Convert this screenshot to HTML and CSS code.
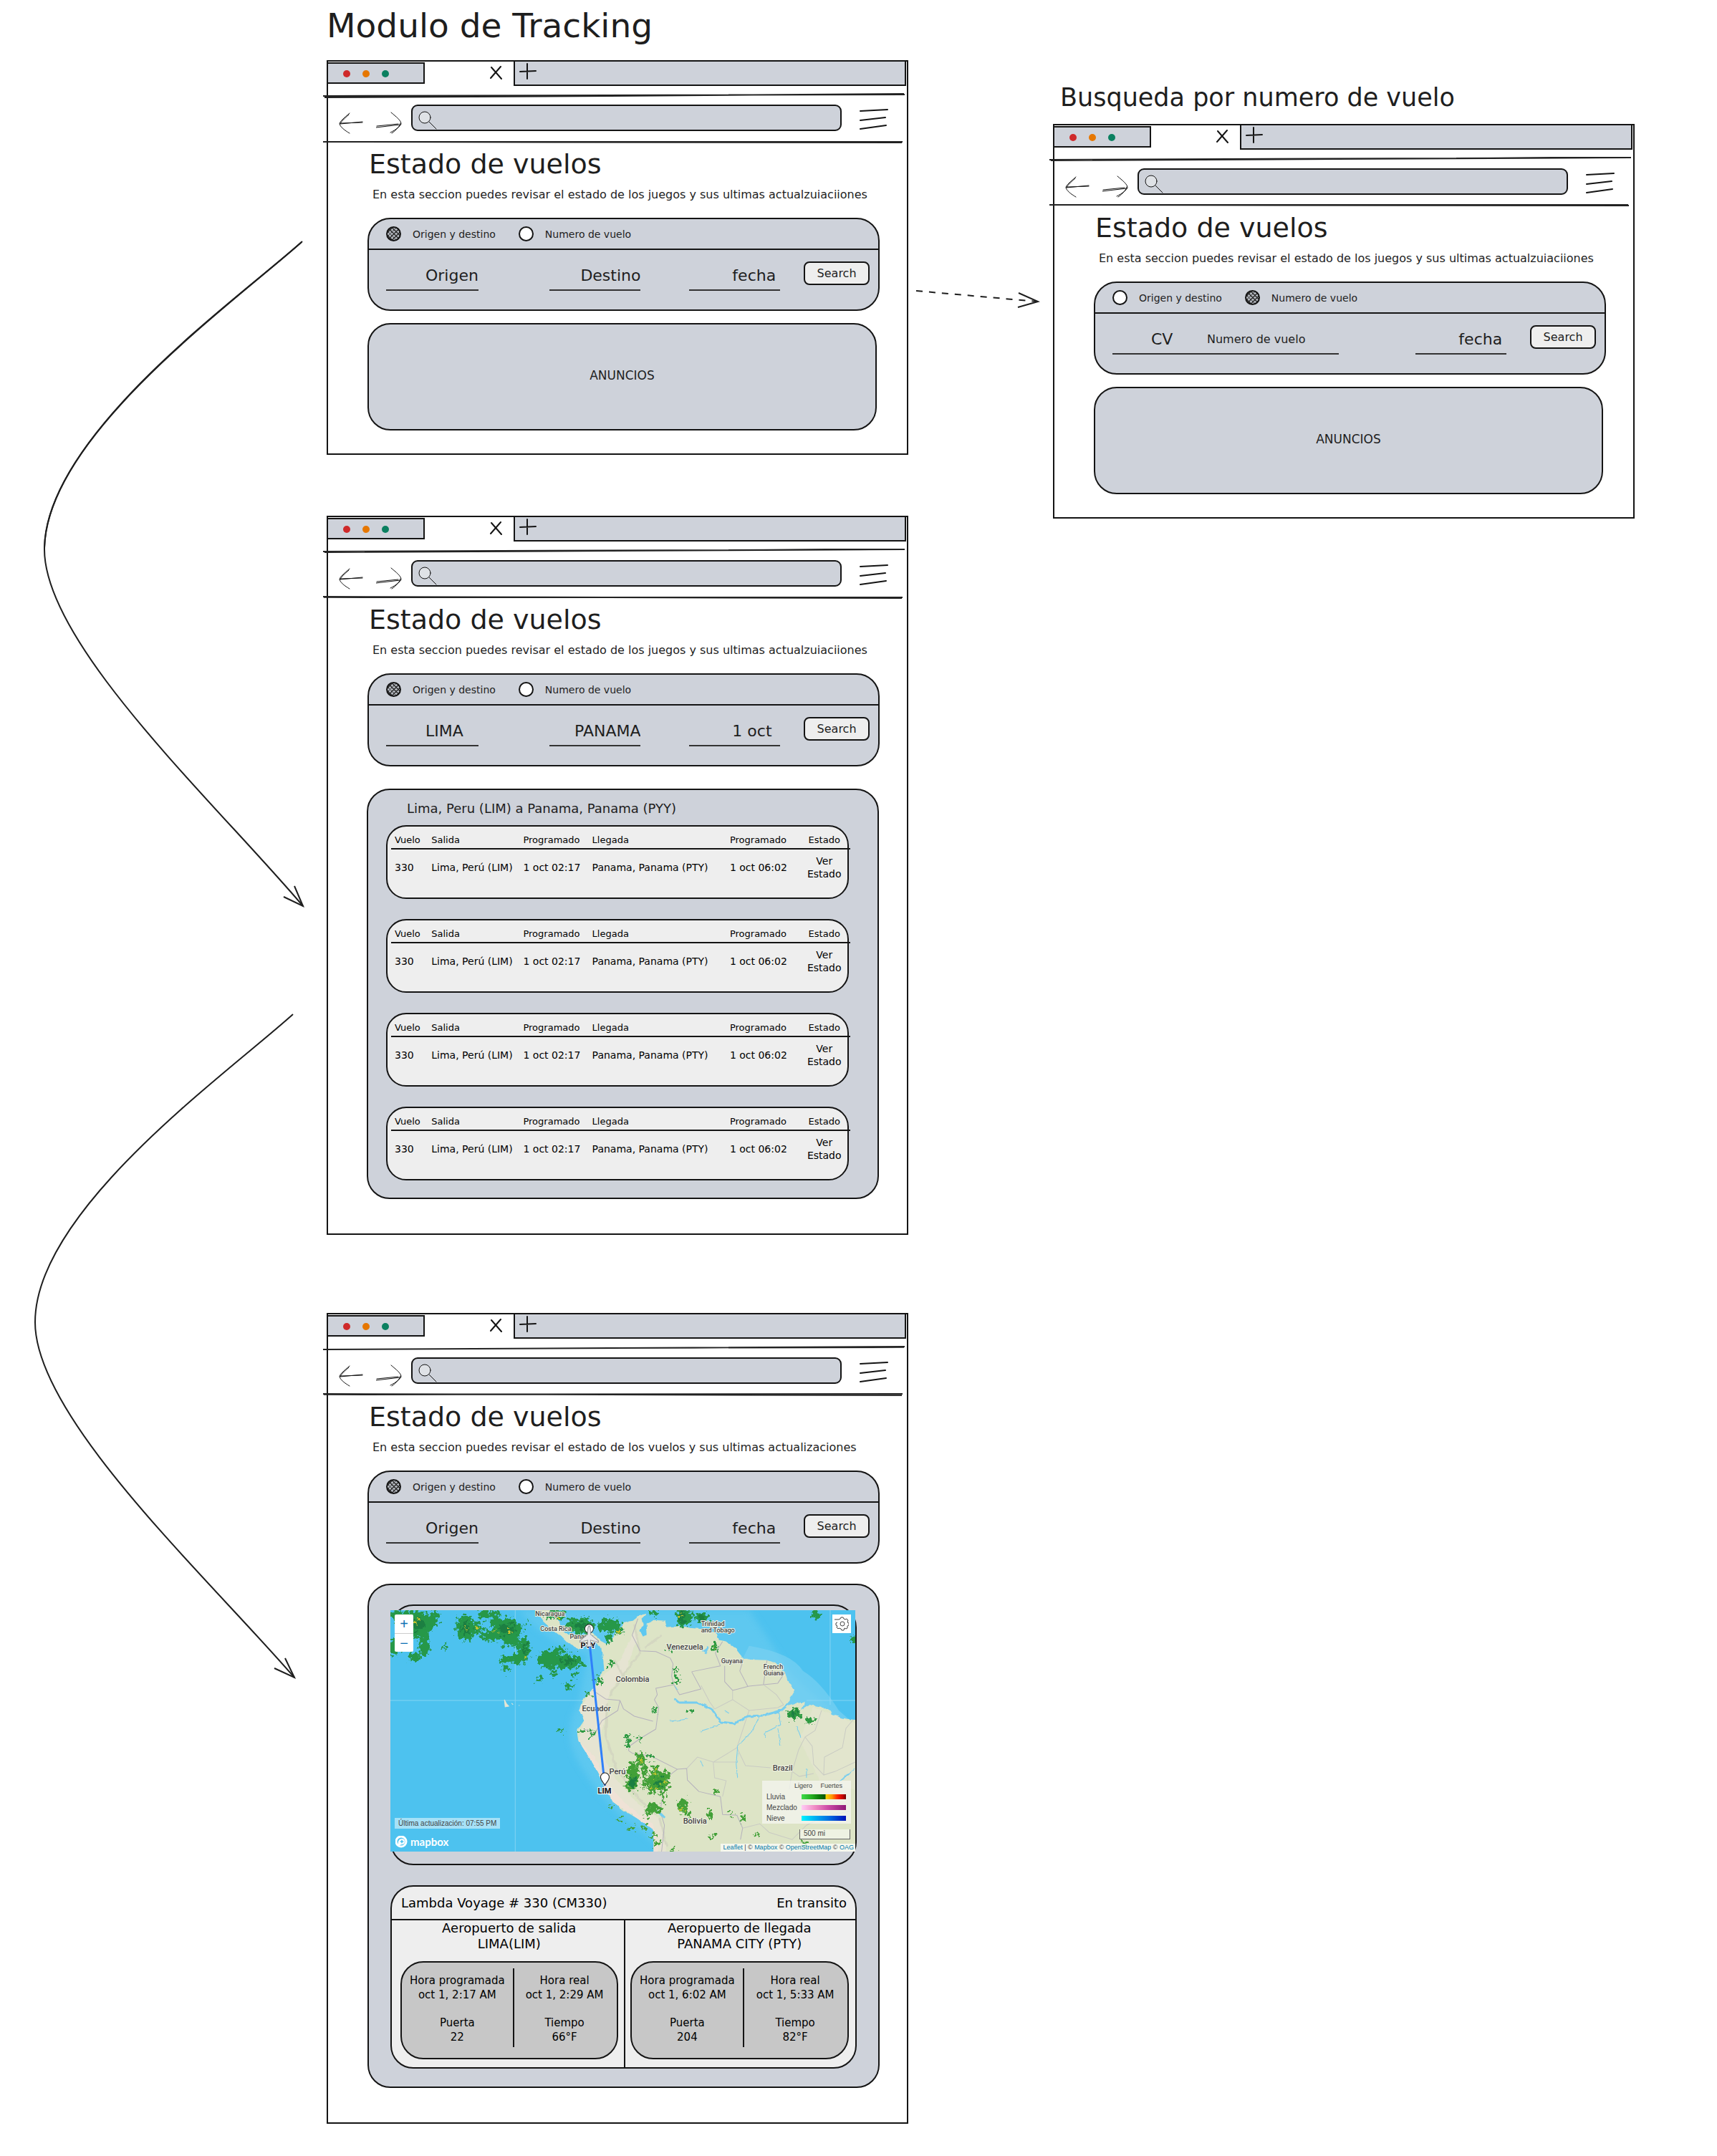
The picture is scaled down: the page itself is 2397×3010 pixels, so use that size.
FILE: index.html
```html
<!DOCTYPE html>
<html lang="es">
<head>
<meta charset="utf-8">
<meta name="viewport" content="width=device-width, initial-scale=1">
<title>Modulo de Tracking</title>
<link rel="stylesheet" href="styles.css">
</head>
<body>
<svg class="defs" width="0" height="0" aria-hidden="true">
  <symbol id="i-close" viewBox="0 0 18 20"><path d="M2 2 16 18M15 1 1 17"/></symbol>
  <symbol id="i-plus" viewBox="0 0 24 24"><path d="M1 12 23 11M11 1V22"/></symbol>
  <symbol id="i-back" viewBox="0 0 36 32"><path d="M15 2C7 9 1 14 1 17C2 21 8 26 15 30M14 4C7 10 3 14 2 17M2 17 33 14M2 16 33 15"/></symbol>
  <symbol id="i-forward" viewBox="0 0 36 32"><path d="M21 1C28 7 35 12 35 17C34 20 28 25 20 29M34 16C33 20 29 25 22 30M1 20 31 17M0 22 34 18"/></symbol>
  <symbol id="i-search" viewBox="0 0 26 28"><circle cx="9" cy="10" r="8" fill="#dfe2e6"/><path d="M15 16 25 26"/></symbol>
  <symbol id="i-menu" viewBox="0 0 40 30"><path d="M1 4 39 2M1 17 36 13M1 29 37 24"/></symbol>
</svg>

<main class="board">
  <svg class="flow flow-left" viewBox="0 0 456 2400" preserveAspectRatio="none" aria-hidden="true">
    <path d="M422 337C330 420 62 610 62 767C62 900 300 1120 423 1265"/>
    <path d="M421 338C331 418 64 607 62 767"/>
    <path d="M411 1237 423 1265 396 1252"/>
    <path d="M409 1416C317 1499 49 1689 49 1846C49 1979 287 2199 411 2342"/>
    <path d="M398 2315 411 2342 383 2329"/>
  </svg>

  <div class="column">
    <h1 class="board-title">Modulo de Tracking</h1>

    <section class="window">
      <div class="tabs">
        <div class="lights"><i class="red"></i><i class="orange"></i><i class="green"></i></div>
        <button class="icon close" type="button" aria-label="Cerrar"><svg width="18" height="20"><use href="#i-close"/></svg></button>
        <div class="tabbar"><button class="icon" type="button" aria-label="Nueva pestaña"><svg width="24" height="24"><use href="#i-plus"/></svg></button></div>
      </div>
      <svg class="rule" viewBox="0 0 812 10" preserveAspectRatio="none"><path d="M0 6 812 4M2 8 400 6 811 3"/></svg>
      <nav class="nav">
        <button class="icon" type="button" aria-label="Atras"><svg width="36" height="32"><use href="#i-back"/></svg></button>
        <button class="icon" type="button" aria-label="Adelante"><svg width="36" height="32"><use href="#i-forward"/></svg></button>
        <label class="address"><svg width="26" height="28"><use href="#i-search"/></svg><input type="text" aria-label="Direccion"></label>
        <button class="icon menu" type="button" aria-label="Menu"><svg width="40" height="30"><use href="#i-menu"/></svg></button>
      </nav>
      <svg class="rule low" viewBox="0 0 812 10" preserveAspectRatio="none"><path d="M0 5 808 6M1 5 809 5"/></svg>
      <div class="page">
        <h2>Estado de vuelos</h2>
        <p class="lead">En esta seccion puedes revisar el estado de los juegos y sus ultimas actualzuiaciiones</p>
        <form class="panel search">
          <div class="modes">
            <label><input type="radio" name="modo-1" checked>Origen y destino</label>
            <label><input type="radio" name="modo-1">Numero de vuelo</label>
          </div>
          <div class="fields">
            <input class="field origin" type="text" aria-label="Origen" placeholder="Origen">
            <input class="field target" type="text" aria-label="Destino" placeholder="Destino">
            <input class="field date" type="text" aria-label="Fecha" placeholder="fecha">
            <button class="submit" type="button">Search</button>
          </div>
        </form>
        <div class="panel ad">ANUNCIOS</div>
      </div>
    </section>

    <section class="window results-window">
      <div class="tabs">
        <div class="lights"><i class="red"></i><i class="orange"></i><i class="green"></i></div>
        <button class="icon close" type="button" aria-label="Cerrar"><svg width="18" height="20"><use href="#i-close"/></svg></button>
        <div class="tabbar"><button class="icon" type="button" aria-label="Nueva pestaña"><svg width="24" height="24"><use href="#i-plus"/></svg></button></div>
      </div>
      <svg class="rule" viewBox="0 0 812 10" preserveAspectRatio="none"><path d="M0 6 812 3M2 7 400 5 811 3"/></svg>
      <nav class="nav">
        <button class="icon" type="button" aria-label="Atras"><svg width="36" height="32"><use href="#i-back"/></svg></button>
        <button class="icon" type="button" aria-label="Adelante"><svg width="36" height="32"><use href="#i-forward"/></svg></button>
        <label class="address"><svg width="26" height="28"><use href="#i-search"/></svg><input type="text" aria-label="Direccion"></label>
        <button class="icon menu" type="button" aria-label="Menu"><svg width="40" height="30"><use href="#i-menu"/></svg></button>
      </nav>
      <svg class="rule low" viewBox="0 0 812 10" preserveAspectRatio="none"><path d="M0 4 808 6M1 5 809 5"/></svg>
      <div class="page">
        <h2>Estado de vuelos</h2>
        <p class="lead">En esta seccion puedes revisar el estado de los juegos y sus ultimas actualzuiaciiones</p>
        <form class="panel search">
          <div class="modes">
            <label><input type="radio" name="modo-2" checked>Origen y destino</label>
            <label><input type="radio" name="modo-2">Numero de vuelo</label>
          </div>
          <div class="fields">
            <input class="field origin" type="text" aria-label="Origen" value="LIMA">
            <input class="field target" type="text" aria-label="Destino" value="PANAMA">
            <input class="field date" type="text" aria-label="Fecha" value="1 oct">
            <button class="submit" type="button">Search</button>
          </div>
        </form>
        <div class="panel results">
          <h3>Lima, Peru (LIM) a Panama, Panama (PYY)</h3>
          <div class="flights">
            <div class="flight"><table>
              <colgroup><col class="c1"><col class="c2"><col class="c3"><col class="c4"><col class="c5"><col class="c6"></colgroup>
              <thead><tr><th>Vuelo</th><th>Salida</th><th>Programado</th><th>Llegada</th><th>Programado</th><th>Estado</th></tr></thead>
              <tbody><tr><td>330</td><td>Lima, Perú (LIM)</td><td>1 oct 02:17</td><td>Panama, Panama (PTY)</td><td>1 oct 06:02</td><td><a href="#estado">Ver<br>Estado</a></td></tr></tbody>
            </table></div>
            <div class="flight"><table>
              <colgroup><col class="c1"><col class="c2"><col class="c3"><col class="c4"><col class="c5"><col class="c6"></colgroup>
              <thead><tr><th>Vuelo</th><th>Salida</th><th>Programado</th><th>Llegada</th><th>Programado</th><th>Estado</th></tr></thead>
              <tbody><tr><td>330</td><td>Lima, Perú (LIM)</td><td>1 oct 02:17</td><td>Panama, Panama (PTY)</td><td>1 oct 06:02</td><td><a href="#estado">Ver<br>Estado</a></td></tr></tbody>
            </table></div>
            <div class="flight"><table>
              <colgroup><col class="c1"><col class="c2"><col class="c3"><col class="c4"><col class="c5"><col class="c6"></colgroup>
              <thead><tr><th>Vuelo</th><th>Salida</th><th>Programado</th><th>Llegada</th><th>Programado</th><th>Estado</th></tr></thead>
              <tbody><tr><td>330</td><td>Lima, Perú (LIM)</td><td>1 oct 02:17</td><td>Panama, Panama (PTY)</td><td>1 oct 06:02</td><td><a href="#estado">Ver<br>Estado</a></td></tr></tbody>
            </table></div>
            <div class="flight"><table>
              <colgroup><col class="c1"><col class="c2"><col class="c3"><col class="c4"><col class="c5"><col class="c6"></colgroup>
              <thead><tr><th>Vuelo</th><th>Salida</th><th>Programado</th><th>Llegada</th><th>Programado</th><th>Estado</th></tr></thead>
              <tbody><tr><td>330</td><td>Lima, Perú (LIM)</td><td>1 oct 02:17</td><td>Panama, Panama (PTY)</td><td>1 oct 06:02</td><td><a href="#estado">Ver<br>Estado</a></td></tr></tbody>
            </table></div>
          </div>
        </div>
      </div>
    </section>

    <section class="window detail-window" id="estado">
      <div class="tabs">
        <div class="lights"><i class="red"></i><i class="orange"></i><i class="green"></i></div>
        <button class="icon close" type="button" aria-label="Cerrar"><svg width="18" height="20"><use href="#i-close"/></svg></button>
        <div class="tabbar"><button class="icon" type="button" aria-label="Nueva pestaña"><svg width="24" height="24"><use href="#i-plus"/></svg></button></div>
      </div>
      <svg class="rule" viewBox="0 0 812 10" preserveAspectRatio="none"><path d="M0 7 812 3M2 7 400 5 811 4"/></svg>
      <nav class="nav">
        <button class="icon" type="button" aria-label="Atras"><svg width="36" height="32"><use href="#i-back"/></svg></button>
        <button class="icon" type="button" aria-label="Adelante"><svg width="36" height="32"><use href="#i-forward"/></svg></button>
        <label class="address"><svg width="26" height="28"><use href="#i-search"/></svg><input type="text" aria-label="Direccion"></label>
        <button class="icon menu" type="button" aria-label="Menu"><svg width="40" height="30"><use href="#i-menu"/></svg></button>
      </nav>
      <svg class="rule low" viewBox="0 0 812 10" preserveAspectRatio="none"><path d="M0 4 808 6M1 5 809 4"/></svg>
      <div class="page">
        <h2>Estado de vuelos</h2>
        <p class="lead">En esta seccion puedes revisar el estado de los vuelos y sus ultimas actualizaciones</p>
        <form class="panel search">
          <div class="modes">
            <label><input type="radio" name="modo-3" checked>Origen y destino</label>
            <label><input type="radio" name="modo-3">Numero de vuelo</label>
          </div>
          <div class="fields">
            <input class="field origin" type="text" aria-label="Origen" placeholder="Origen">
            <input class="field target" type="text" aria-label="Destino" placeholder="Destino">
            <input class="field date" type="text" aria-label="Fecha" placeholder="fecha">
            <button class="submit" type="button">Search</button>
          </div>
        </form>
        <div class="panel detail">
          <div class="map-frame">
            <div class="map">
              <svg class="map-art" viewBox="0 0 648 337" preserveAspectRatio="xMidYMid slice" role="img" aria-label="Mapa del vuelo">
                <defs>
                  <filter id="rough" x="-5%" y="-5%" width="110%" height="110%"><feTurbulence type="fractalNoise" baseFrequency="0.2" numOctaves="3" seed="4"/><feDisplacementMap in="SourceGraphic" scale="18" xChannelSelector="R" yChannelSelector="G"/></filter>
                  <filter id="coast" x="-5%" y="-5%" width="110%" height="110%"><feTurbulence type="fractalNoise" baseFrequency="0.12" numOctaves="2" seed="8"/><feDisplacementMap in="SourceGraphic" scale="4" xChannelSelector="R" yChannelSelector="G"/></filter>
                  <filter id="soft"><feGaussianBlur stdDeviation="5"/></filter>
                </defs>
                <rect width="648" height="337" fill="#4dc2ef"/>
                <path d="M180 0Q215 45 275 62L262 130Q235 175 270 225Q300 275 352 310L380 337H648V170L560 90 500 0Z" fill="#6ccdf1" filter="url(#soft)" opacity=".55"/>
                <path d="M500 50Q560 60 575 85Q600 100 625 140L648 160 560 140 490 70Z" fill="#7fd2f2" opacity=".6"/>
                <g stroke="#9adcf5" stroke-width="1" opacity=".7"><path d="M174 0V337M0 126H268M580 126H648M613 0V132"/></g>
                <path d="M159 125 162 131 165 134 160 135ZM169 130 171 132M179 133H180" fill="#e7e6d4" stroke="#e7e6d4"/>
                <g filter="url(#coast)">
                  <path id="land" d="M198-8 212 15 225 27 238 37 248 47 262 54 272 50 285 44 295 54 297 72 298 85 290 95 282 112 268 125 263 139 270 154 260 169 262 182 273 195 283 215 293 235 305 255 310 267 325 279 345 291 362 300 367 307V347H660V154L638 152 628 150 618 155 615 142 602 135 585 132 572 140 578 129 565 129 552 134 558 122 564 112 555 102 550 87 538 75 525 70 493 69 482 55 468 44 458 42 455 32 438 27 418 25 405 22 385 24 383 15 368 14 357 19 358 32 352 37 348 29 352 20 350 12 357 5 348 7 338 15 325 17 322 22 313 34 302 47 293 42 282 32 268 40 252 37 238 27 235 15 233-8Z" fill="#dde4c6"/>
                  <path d="M290 98 320 70 340 30 345 35 330 80 305 115 300 150 290 190 310 230 345 270 375 290 385 337H367V307L345 291 310 267 283 215 262 182 270 154 263 139Z" fill="#e6e4d2"/>
                  <path d="M262 182 283 215 310 267 345 291 367 307V337H374L366 298 330 272 305 245 285 205Z" fill="#efe2d6"/>
                  <path d="M590 135 648 158V250L600 240 570 180Z" fill="#e2e5cd"/>
                  <g fill="none" stroke="#d0d2bf" stroke-width="3" opacity=".7"><path d="M340 20 348 60 325 90 305 120M302 130 300 175 315 220 345 262 370 285M355 52 378 35M375 290 385 330M312 70 330 100"/></g>
                </g>
                <g fill="none" stroke="#b5b1bd" stroke-width="1" stroke-linejoin="round">
                  <path d="M345 12 337 35 348 57 370 58 390 67 394 75 392 92 395 104 370 109 372 118 368 125 374 136 370 166 350 178 333 190 332 196"/>
                  <path d="M282 112 300 124 320 126 325 138 340 148 366 155M320 126 317 140 295 154 285 172 270 166"/>
                  <path d="M332 196 338 200 362 203 400 222 413 221 414 237 430 253 460 260 463 285 483 286 491 304 488 320M400 222 376 240 380 258 376 280 382 300 378 337"/>
                  <path d="M420 86 433 110 403 118 395 104M420 86 460 78 453 60 463 44M466 78 466 100 477 112 500 106 540 102 550 87M492 69 487 85 498 106M525 70 520 104"/>
                </g>
                <g fill="none" stroke="#c9cbc3" stroke-width="1">
                  <path d="M433 105 445 128 452 138 477 125 477 112M477 125 500 140 540 136 548 132 538 118 520 104M500 140 483 192 495 217 530 220M413 221 428 205 450 212 483 212M450 212 452 234 468 238 463 260M483 192 450 212"/>
                  <path d="M601 140 592 168 578 177 569 195 560 225 556 250M578 177 588 190 590 215 604 230 620 225 648 212M604 230 605 205 630 192 635 165 645 153M560 225 570 232 590 228"/>
                  <path d="M491 304 515 298 528 310 560 320 580 300 600 290 640 280"/>
                </g>
                <g fill="none" stroke="#74cdf0" stroke-width="2" stroke-linejoin="round" filter="url(#coast)">
                  <path d="M396 124 402 129 428 129 448 138 460 156 480 158 498 148 520 147 545 140 558 128" stroke-width="3"/>
                  <path d="M432 169 460 160M514 149 505 168 484 190 482 215 484 234M540 140 544 160 520 172 523 178M540 165 544 190M390 155 415 152M638 228 625 240 648 221M566 162 572 178M432 211 436 218M580 222 580 234M466 140 472 144M396 104 400 112" stroke-width="1"/>
                  <path d="M435 58 442 52 438 62M372 280 382 290" stroke-width="3"/>
                </g>
                <g filter="url(#rough)" fill="#2f9a43">
                  <g fill="#27984a">
                    <ellipse cx="35" cy="20" rx="25" ry="19"/><ellipse cx="14" cy="8" rx="17" ry="7"/><ellipse cx="33" cy="66" rx="9" ry="7"/><ellipse cx="5" cy="52" rx="7" ry="13"/><ellipse cx="48" cy="50" rx="7" ry="15"/><ellipse cx="62" cy="10" rx="5" ry="11"/><ellipse cx="76" cy="50" rx="2" ry="4"/>
                    <ellipse cx="105" cy="25" rx="13" ry="18"/><ellipse cx="122" cy="25" rx="8" ry="7"/><ellipse cx="132" cy="6" rx="9" ry="7"/><ellipse cx="146" cy="12" rx="7" ry="12"/><ellipse cx="162" cy="27" rx="21" ry="16"/><ellipse cx="141" cy="36" rx="16" ry="8"/><ellipse cx="168" cy="42" rx="13" ry="9"/><ellipse cx="186" cy="55" rx="8" ry="18"/><ellipse cx="176" cy="69" rx="12" ry="7"/><ellipse cx="160" cy="68" rx="7" ry="5"/><ellipse cx="160" cy="82" rx="6" ry="4"/><ellipse cx="190" cy="20" rx="3" ry="3"/>
                    <ellipse cx="221" cy="69" rx="15" ry="13"/><ellipse cx="246" cy="72" rx="22" ry="10"/><ellipse cx="265" cy="73" rx="5" ry="4"/><ellipse cx="236" cy="56" rx="9" ry="5"/><ellipse cx="248" cy="106" rx="5" ry="5"/><ellipse cx="228" cy="88" rx="5" ry="4"/><ellipse cx="256" cy="90" rx="4" ry="3"/><ellipse cx="208" cy="96" rx="4" ry="3"/>
                    <ellipse cx="230" cy="6" rx="15" ry="6"/><ellipse cx="265" cy="22" rx="21" ry="11"/><ellipse cx="305" cy="21" rx="16" ry="9"/><ellipse cx="318" cy="30" rx="6" ry="5"/><ellipse cx="305" cy="40" rx="4" ry="7"/>
                    <ellipse cx="406" cy="11" rx="7" ry="14"/><ellipse cx="415" cy="10" rx="6" ry="9"/><ellipse cx="434" cy="11" rx="11" ry="7"/><ellipse cx="368" cy="4" rx="6" ry="4"/><ellipse cx="592" cy="6" rx="6" ry="6"/><ellipse cx="645" cy="41" rx="3" ry="5"/>
                  </g>
                  <ellipse cx="291" cy="99" rx="4" ry="7"/><ellipse cx="276" cy="118" rx="4" ry="3"/><ellipse cx="307" cy="75" rx="3" ry="4"/><ellipse cx="282" cy="173" rx="3" ry="5"/><ellipse cx="269" cy="169" rx="7" ry="2"/><ellipse cx="238" cy="168" rx="5" ry="2"/><ellipse cx="331" cy="177" rx="4" ry="4"/><ellipse cx="331" cy="187" rx="4" ry="5"/>
                  <ellipse cx="452" cy="51" rx="4" ry="6"/><ellipse cx="389" cy="52" rx="3" ry="4"/><ellipse cx="400" cy="97" rx="3" ry="7"/><ellipse cx="397" cy="84" rx="2" ry="4"/><ellipse cx="562" cy="145" rx="10" ry="7"/><ellipse cx="585" cy="155" rx="7" ry="4"/><ellipse cx="418" cy="141" rx="3" ry="3"/><ellipse cx="368" cy="140" rx="3" ry="4"/><ellipse cx="348" cy="180" rx="3" ry="3"/><ellipse cx="363" cy="205" rx="3" ry="3"/>
                  <g fill="#43a038"><ellipse cx="348" cy="209" rx="6" ry="10"/><ellipse cx="338" cy="229" rx="9" ry="17"/><ellipse cx="336" cy="244" rx="9" ry="7"/><ellipse cx="354" cy="228" rx="3" ry="22"/><ellipse cx="369" cy="226" rx="6" ry="9"/><ellipse cx="373" cy="240" rx="16" ry="13"/><ellipse cx="383" cy="233" rx="7" ry="9"/><ellipse cx="366" cy="250" rx="9" ry="6"/><ellipse cx="381" cy="258" rx="3" ry="10"/><ellipse cx="367" cy="276" rx="10" ry="7"/><ellipse cx="359" cy="284" rx="4" ry="5"/><ellipse cx="408" cy="270" rx="8" ry="7"/><ellipse cx="407" cy="279" rx="5" ry="5"/><ellipse cx="416" cy="286" rx="3" ry="3"/><ellipse cx="445" cy="285" rx="4" ry="5"/><ellipse cx="476" cy="283" rx="2" ry="4"/><ellipse cx="492" cy="290" rx="3" ry="5"/><ellipse cx="455" cy="254" rx="4" ry="3"/><ellipse cx="337" cy="303" rx="6" ry="3"/><ellipse cx="354" cy="304" rx="3" ry="3"/><ellipse cx="368" cy="314" rx="3" ry="3"/><ellipse cx="371" cy="325" rx="4" ry="3"/><ellipse cx="449" cy="316" rx="4" ry="3"/><ellipse cx="578" cy="326" rx="5" ry="3"/><ellipse cx="511" cy="313" rx="4" ry="2"/><ellipse cx="308" cy="274" rx="3" ry="3"/><ellipse cx="320" cy="292" rx="3" ry="3"/><ellipse cx="394" cy="334" rx="3" ry="3"/></g>
                  <g fill="#1d7f42"><ellipse cx="38" cy="20" rx="10" ry="8"/><ellipse cx="106" cy="25" rx="6" ry="8"/><ellipse cx="163" cy="27" rx="12" ry="8"/><ellipse cx="187" cy="55" rx="3" ry="8"/><ellipse cx="248" cy="71" rx="10" ry="4"/><ellipse cx="266" cy="22" rx="12" ry="5"/><ellipse cx="407" cy="10" rx="4" ry="9"/><ellipse cx="434" cy="11" rx="6" ry="4"/><ellipse cx="562" cy="144" rx="4" ry="3"/><ellipse cx="375" cy="240" rx="6" ry="5"/><ellipse cx="337" cy="240" rx="5" ry="8"/></g>
                  <g fill="#c8c62f"><ellipse cx="37" cy="17" rx="2" ry="3"/><ellipse cx="107" cy="26" rx="2" ry="2"/><ellipse cx="122" cy="24" rx="3" ry="2"/><ellipse cx="145" cy="30" rx="2" ry="2"/><ellipse cx="166" cy="30" rx="2" ry="4"/><ellipse cx="189" cy="64" rx="1" ry="2"/><ellipse cx="230" cy="7" rx="3" ry="2"/><ellipse cx="319" cy="30" rx="2" ry="2"/><ellipse cx="405" cy="7" rx="2" ry="2"/><ellipse cx="452" cy="51" rx="1" ry="2"/><ellipse cx="348" cy="210" rx="2" ry="3"/><ellipse cx="369" cy="227" rx="2" ry="4"/><ellipse cx="384" cy="239" rx="2" ry="3"/><ellipse cx="369" cy="249" rx="4" ry="2"/><ellipse cx="405" cy="278" rx="2" ry="2"/></g>
                </g>
                <g class="places">
                  <text x="202" y="8">Nicaragua</text><text x="209" y="29">Costa Rica</text><text x="250" y="40">Panama</text>
                  <text class="minor" x="433" y="22">Trinidad</text><text class="minor" x="433" y="31">and Tobago</text>
                  <text class="major" x="385" y="55">Venezuela</text><text x="461" y="74">Guyana</text>
                  <text class="minor" x="520" y="82">French</text><text class="minor" x="520" y="91">Guiana</text>
                  <text class="major" x="314" y="100">Colombia</text><text class="major" x="267" y="141">Ecuador</text>
                  <text class="major" x="305" y="229">Perú</text><text class="major" x="533" y="224">Brazil</text><text class="major" x="408" y="298">Bolivia</text>
                  <text class="code" x="265" y="53">PTY</text><text class="code" x="289" y="256">LIM</text>
                </g>
                <path d="M278 50 299 245" stroke="#2f80fa" stroke-width="3" fill="none"/>
                <g fill="#fff" stroke="#222" stroke-width="1"><circle cx="277" cy="26" r="6"/><path d="M299 244C297 240 293 238 293 233A6 6 0 0 1 305 233C305 238 301 240 299 244Z"/></g>
                <path d="M277 22C275 23 275 26 275 34L264 43V45L275 42V48L272 51H282L279 48V42L290 45V43L279 34C279 26 279 23 277 22Z" fill="#e6e6e8" stroke="#9b9ba0" stroke-width="1"/>
              </svg>
              <div class="zoom"><button type="button" aria-label="Acercar">+</button><button type="button" aria-label="Alejar">−</button></div>
              <button class="gear" type="button" aria-label="Ajustes"><svg width="20" height="20" viewBox="0 0 20 20"><circle cx="11" cy="10" r="3"/><path d="M0 4H6L8 3 9 1H12L13 3 15 4 17 3 19 5 18 8 20 9V12L18 13 18 16 16 17 14 16 13 19H10L9 17 6 16 5 17 3 15 4 13 2 12V9L4 8"/></svg></button>
              <div class="updated">Última actualización: 07:55 PM</div>
              <div class="mapbox"><svg width="17" height="17" viewBox="0 0 17 17"><circle cx="8" cy="8" r="7" fill="none" stroke="#fff" stroke-width="3"/><path d="M4 13C3 8 5 4 9 4A4 4 0 0 1 9 12C7 13 5 13 4 13Z" fill="#fff"/><path d="M9 5 10 7 12 8 10 9 9 11 8 9 6 8 8 7Z" fill="#4dc2ef"/></svg><span>mapbox</span></div>
              <div class="legend">
                <span></span><span class="scale-names"><span>Ligero</span><span>Fuertes</span></span>
                <span>Lluvia</span><i class="bar rain"></i>
                <span>Mezclado</span><i class="bar mixed"></i>
                <span>Nieve</span><i class="bar snow"></i>
              </div>
              <div class="scale">500 mi</div>
              <div class="credits"><a href="#leaflet">Leaflet</a> | © <a href="#mapbox">Mapbox</a> © <a href="#osm">OpenStreetMap</a> © <a href="#oag">OAG</a></div>
            </div>
          </div>
          <article class="info">
            <header><h3>Lambda Voyage # 330 (CM330)</h3><span>En transito</span></header>
            <div class="airports">
              <section class="airport">
                <h4>Aeropuerto de salida<br>LIMA(LIM)</h4>
                <div class="facts">
                  <dl><dt>Hora programada</dt><dd>oct 1, 2:17 AM</dd><dt>Puerta</dt><dd>22</dd></dl>
                  <dl><dt>Hora real</dt><dd>oct 1, 2:29 AM</dd><dt>Tiempo</dt><dd>66°F</dd></dl>
                </div>
              </section>
              <section class="airport">
                <h4>Aeropuerto de llegada<br>PANAMA CITY (PTY)</h4>
                <div class="facts">
                  <dl><dt>Hora programada</dt><dd>oct 1, 6:02 AM</dd><dt>Puerta</dt><dd>204</dd></dl>
                  <dl><dt>Hora real</dt><dd>oct 1, 5:33 AM</dd><dt>Tiempo</dt><dd>82°F</dd></dl>
                </div>
              </section>
            </div>
          </article>
        </div>
      </div>
    </section>
  </div>

  <svg class="flow flow-middle" viewBox="0 0 202 440" preserveAspectRatio="none" aria-hidden="true">
    <path class="dashed" d="M11 406 180 421"/>
    <path d="M154 409 181 421 153 429"/>
  </svg>

  <div class="column aside">
    <h2 class="board-subtitle">Busqueda por numero de vuelo</h2>
    <section class="window">
      <div class="tabs">
        <div class="lights"><i class="red"></i><i class="orange"></i><i class="green"></i></div>
        <button class="icon close" type="button" aria-label="Cerrar"><svg width="18" height="20"><use href="#i-close"/></svg></button>
        <div class="tabbar"><button class="icon" type="button" aria-label="Nueva pestaña"><svg width="24" height="24"><use href="#i-plus"/></svg></button></div>
      </div>
      <svg class="rule" viewBox="0 0 812 10" preserveAspectRatio="none"><path d="M0 6 812 3M2 7 400 5 811 3"/></svg>
      <nav class="nav">
        <button class="icon" type="button" aria-label="Atras"><svg width="36" height="32"><use href="#i-back"/></svg></button>
        <button class="icon" type="button" aria-label="Adelante"><svg width="36" height="32"><use href="#i-forward"/></svg></button>
        <label class="address"><svg width="26" height="28"><use href="#i-search"/></svg><input type="text" aria-label="Direccion"></label>
        <button class="icon menu" type="button" aria-label="Menu"><svg width="40" height="30"><use href="#i-menu"/></svg></button>
      </nav>
      <svg class="rule low" viewBox="0 0 812 10" preserveAspectRatio="none"><path d="M0 4 808 4M1 4 809 5"/></svg>
      <div class="page">
        <h2>Estado de vuelos</h2>
        <p class="lead">En esta seccion puedes revisar el estado de los juegos y sus ultimas actualzuiaciiones</p>
        <form class="panel search">
          <div class="modes">
            <label><input type="radio" name="modo-4">Origen y destino</label>
            <label><input type="radio" name="modo-4" checked>Numero de vuelo</label>
          </div>
          <div class="fields">
            <div class="number">
              <input class="carrier" type="text" aria-label="Aerolinea" value="CV">
              <input type="text" aria-label="Numero de vuelo" placeholder="Numero de vuelo">
            </div>
            <input class="field date" type="text" aria-label="Fecha" placeholder="fecha">
            <button class="submit" type="button">Search</button>
          </div>
        </form>
        <div class="panel ad">ANUNCIOS</div>
      </div>
    </section>
  </div>
</main>
</body>
</html>
```
FILE: styles.css
```css
:root {
  --ink: #1e1e1e;
  --line: 2px solid #141414;
  --gray: #ced2da;
  --light: #eeeeee;
  --dark: #c7c7c7;
}

* { box-sizing: border-box; }

body {
  margin: 0;
  background: #fff;
  color: var(--ink);
  font-family: "DejaVu Sans", sans-serif;
}

h1, h2, h3, h4, p, dl, dd { margin: 0; font-weight: 400; }

input, button {
  font: inherit;
  color: inherit;
  background: none;
  border: 0;
  border-radius: 0;
  padding: 0;
  margin: 0;
  min-width: 0;
}

input::placeholder { color: inherit; opacity: 1; }

a { color: inherit; text-decoration: none; }

.defs { position: absolute; }

/* Board */
.board {
  display: grid;
  grid-template-columns: 456fr 812fr 202fr 812fr 115fr;
  align-items: start;
  padding-bottom: 44px;
}

.board-title {
  font-size: 47px;
  line-height: 72px;
  margin-bottom: 12px;
}

.aside { padding-top: 112px; }

.board-subtitle {
  font-size: 35px;
  line-height: 48px;
  padding-left: 10px;
  margin-bottom: 13px;
}

.flow {
  width: 100%;
  fill: none;
  stroke: var(--ink);
  stroke-width: 2;
  overflow: visible;
}

.flow-left { height: 2400px; }
.flow-middle { height: 440px; }
.flow .dashed { stroke-dasharray: 9 9; }

/* Browser window */
.window { border: var(--line); }
.results-window { margin-top: 85px; }
.detail-window { margin-top: 109px; }

.tabs { display: flex; height: 34px; }

.lights {
  display: flex;
  align-items: center;
  gap: 17px;
  width: 137px;
  height: 30px;
  margin: 1px 0 0 -2px;
  padding: 2px 0 0 21px;
  background: var(--gray);
  border: var(--line);
}

.lights i { width: 10px; height: 10px; border-radius: 50%; }
.red { background: #cf2a2a; }
.orange { background: #e67700; }
.green { background: #0b8060; }

.icon { display: block; line-height: 0; }

.icon svg, .address svg {
  display: block;
  fill: none;
  stroke: #141414;
  stroke-width: 2;
  stroke-linecap: round;
  overflow: visible;
}

.close { width: 124px; padding: 0 16px 2px 91px; }

.tabbar {
  flex: 1;
  margin: -2px 1px 0 0;
  padding: 2px 0 0 6px;
  background: var(--gray);
  border: var(--line);
}

.rule {
  display: block;
  width: calc(100% + 4px);
  height: 10px;
  margin: 8px 0 0 -7px;
  fill: none;
  stroke: #222;
  stroke-width: 2;
}

.rule.low { margin-top: 5px; }

.nav {
  display: flex;
  padding: 8px 26px 0 15px;
}

.nav > .icon { margin-top: 10px; }
.nav > .icon svg { stroke-width: 1; }
.nav > .icon:first-child { margin-right: 16px; }
.nav > .icon.menu { margin: 4px 0 0 25px; height: 32px; }
.nav > .icon.menu svg { stroke-width: 2; }

.address {
  flex: 1;
  display: flex;
  height: 37px;
  margin-left: 13px;
  padding: 6px 8px;
  background: var(--gray);
  border: var(--line);
  border-radius: 9px;
}

.address svg { stroke-width: 1; }
.address input { flex: 1; }

.page { padding: 0 38px 32px 55px; }
.page h2 {
  font-size: 38px;
  line-height: 52px;
  margin-bottom: 5px;
  padding-left: 2px;
}

.lead {
  font-size: 16px;
  line-height: 24px;
  margin-bottom: 20px;
  padding-left: 7px;
  white-space: nowrap;
}

.panel {
  background: var(--gray);
  border: var(--line);
  border-radius: 32px;
}

.results-window .page, .detail-window .page { padding-bottom: 48px; }

/* Search form */
.modes {
  display: flex;
  align-items: center;
  gap: 32px;
  height: 43px;
  padding-left: 24px;
  border-bottom: var(--line);
}

.modes label {
  display: flex;
  align-items: center;
  gap: 16px;
  font-size: 14px;
}

.modes input {
  appearance: none;
  width: 21px;
  height: 21px;
  border: var(--line);
  border-radius: 50%;
  background: #fff;
}

.modes input:checked {
  background:
    repeating-linear-gradient(45deg, #333 0 1px, transparent 1px 4px),
    repeating-linear-gradient(135deg, #333 0 1px, transparent 1px 4px),
    #aeb2b9;
}

.fields {
  display: grid;
  grid-template-columns: 129fr 99fr 128fr 68fr 127fr 33fr 92fr;
  align-items: start;
  height: 83px;
  padding: 16px 12px 0 24px;
}

.field, .number {
  width: 100%;
  height: 36px;
  margin-top: 5px;
  padding-bottom: 6px;
  border-bottom: 2px solid #333;
  font-size: 22px;
}

.origin { grid-column: 1; padding-left: 55px; }
.target { grid-column: 3; text-align: right; }
.date { grid-column: 5; padding-left: 60px; }

.number {
  grid-column: 1 / 4;
  width: 89%;
  display: flex;
  padding-left: 54px;
}

.number input { flex: 1; font-size: 16px; }
.number .carrier { flex: 0 0 78px; font-size: 22px; }

.submit {
  grid-column: 7;
  height: 33px;
  font-size: 16px;
  background: var(--light);
  border: var(--line);
  border-radius: 8px;
}

.ad {
  display: grid;
  place-items: center;
  height: 150px;
  margin: 17px 4px 0 0;
  padding-bottom: 5px;
  font-size: 17px;
}

/* Flight results */
.results {
  margin: 31px 1px 0 -1px;
  padding: 14px 40px 24px 25px;
}

.results h3 {
  font-size: 18px;
  line-height: 24px;
  margin-bottom: 11px;
  padding-left: 29px;
}

.flights { display: grid; gap: 28px; }

.flight {
  height: 103px;
  background: var(--light);
  border: var(--line);
  border-radius: 28px;
}

.flight table {
  width: calc(100% - 1px);
  margin-left: 5px;
  table-layout: fixed;
  border-collapse: collapse;
  color: #000;
}

.c1 { width: 8%; }
.c2 { width: 20%; }
.c3 { width: 15%; }
.c4 { width: 30%; }
.c5 { width: 16%; }
.c6 { width: 11%; }

.flight th {
  height: 31px;
  padding: 0 0 2px 5px;
  border-bottom: var(--line);
  vertical-align: bottom;
  text-align: left;
  font-size: 13px;
  font-weight: 400;
  line-height: 18px;
}

.flight td {
  padding: 7px 0 0 5px;
  font-size: 14px;
  line-height: 18px;
  white-space: nowrap;
}

.flight th:last-child, .flight td:last-child { padding-right: 2px; padding-left: 0; text-align: center; }

/* Flight detail */
.detail { margin-top: 28px; padding: 27px 30px 25px; }

.map-frame {
  height: 364px;
  border: var(--line);
  border-radius: 32px;
}

.map {
  position: relative;
  height: 337px;
  margin: 6px 0 0 -2px;
  overflow: hidden;
  font-family: "Liberation Sans", Arial, sans-serif;
  color: #444;
}

.map-art { display: block; width: 100%; height: 100%; }

.places text {
  font: 500 9px Roboto, sans-serif;
  fill: #444;
  stroke: #eef0e2;
  stroke-width: 2;
  paint-order: stroke;
}

.places .major { font-size: 11px; }
.places .minor { font-size: 9px; }
.places .code { font-size: 11px; font-weight: 900; fill: #222; stroke: #fff; }

.zoom {
  position: absolute;
  top: 6px;
  left: 6px;
  width: 26px;
  background: #fff;
  border-radius: 2px;
}

.zoom button {
  display: block;
  width: 26px;
  height: 26px;
  font-size: 20px;
  line-height: 24px;
  color: #0a6fb3;
}

.zoom button + button { border-top: 1px solid #ccc; }

.gear {
  position: absolute;
  top: 6px;
  right: 6px;
  width: 26px;
  height: 26px;
  padding: 3px;
  background: #fff;
}

.gear svg { display: block; fill: none; stroke: #444; }

.updated {
  position: absolute;
  left: 6px;
  bottom: 32px;
  padding: 0 5px;
  font-size: 10px;
  line-height: 15px;
  background: rgba(255, 255, 255, .5);
}

.mapbox {
  position: absolute;
  left: 7px;
  bottom: 5px;
  display: flex;
  align-items: center;
  gap: 4px;
  font: 700 15px/18px Lato, sans-serif;
  color: #fff;
}

.legend {
  position: absolute;
  right: 6px;
  bottom: 39px;
  display: grid;
  grid-template-columns: 49px 62px;
  align-items: center;
  width: 124px;
  padding: 0 6px;
  font-size: 10px;
  line-height: 15px;
  background: rgba(244, 246, 240, .75);
}

.scale-names {
  display: flex;
  justify-content: space-between;
  margin: 0 5px 0 -10px;
  font-size: 9px;
}

.bar { height: 7px; }
.rain { background: linear-gradient(90deg, #3fdc4a, #22a81c 25%, #0b7a08 40%, #075407 53%, #f2d500 55%, #ff9a00 68%, #ff2a00 80%, #c40000 93%, #6b0000); }
.mixed { background: linear-gradient(90deg, #ffccf5, #f08cc4 30%, #cc4aa6 60%, #8f1a78); }
.snow { background: linear-gradient(90deg, #00f4ff, #00a6f0 35%, #0066e0 65%, #0010b8); }

.scale {
  position: absolute;
  right: 7px;
  bottom: 17px;
  width: 71px;
  height: 14px;
  padding-left: 5px;
  font-size: 10px;
  line-height: 12px;
  background: rgba(255, 255, 255, .5);
  border: 1px solid #666;
  border-top: 0;
}

.credits {
  position: absolute;
  right: 0;
  bottom: 0;
  padding: 0 2px 0 4px;
  font-size: 9px;
  line-height: 11px;
  background: rgba(255, 255, 255, .7);
}

.credits a { color: #0078a8; }

.info {
  height: 256px;
  margin-top: 28px;
  color: #000;
  background: var(--light);
  border: var(--line);
  border-radius: 32px;
}

.info header {
  display: flex;
  justify-content: space-between;
  align-items: center;
  height: 47px;
  padding: 0 12px 0 13px;
  border-bottom: var(--line);
  font-size: 18px;
}

.info h3 { font-size: 18px; }

.airports { display: grid; grid-template-columns: 1fr 1fr; height: 205px; }
.airport { padding: 0 8px 0 12px; }
.airport + .airport { padding: 0 9px 0 7px; border-left: var(--line); }

.airport h4 {
  font-size: 18px;
  line-height: 22px;
  text-align: center;
  margin-bottom: 13px;
}

.facts {
  display: grid;
  grid-template-columns: 52fr 48fr;
  height: 137px;
  padding: 8px 2px 0 0;
  background: var(--dark);
  border: var(--line);
  border-radius: 32px;
}

.facts dl {
  height: 110px;
  padding-top: 7px;
  text-align: center;
  font-size: 15px;
  line-height: 20px;
  white-space: nowrap;
}

.facts dl + dl { border-left: var(--line); }
.facts dd + dt { margin-top: 19px; }
```
